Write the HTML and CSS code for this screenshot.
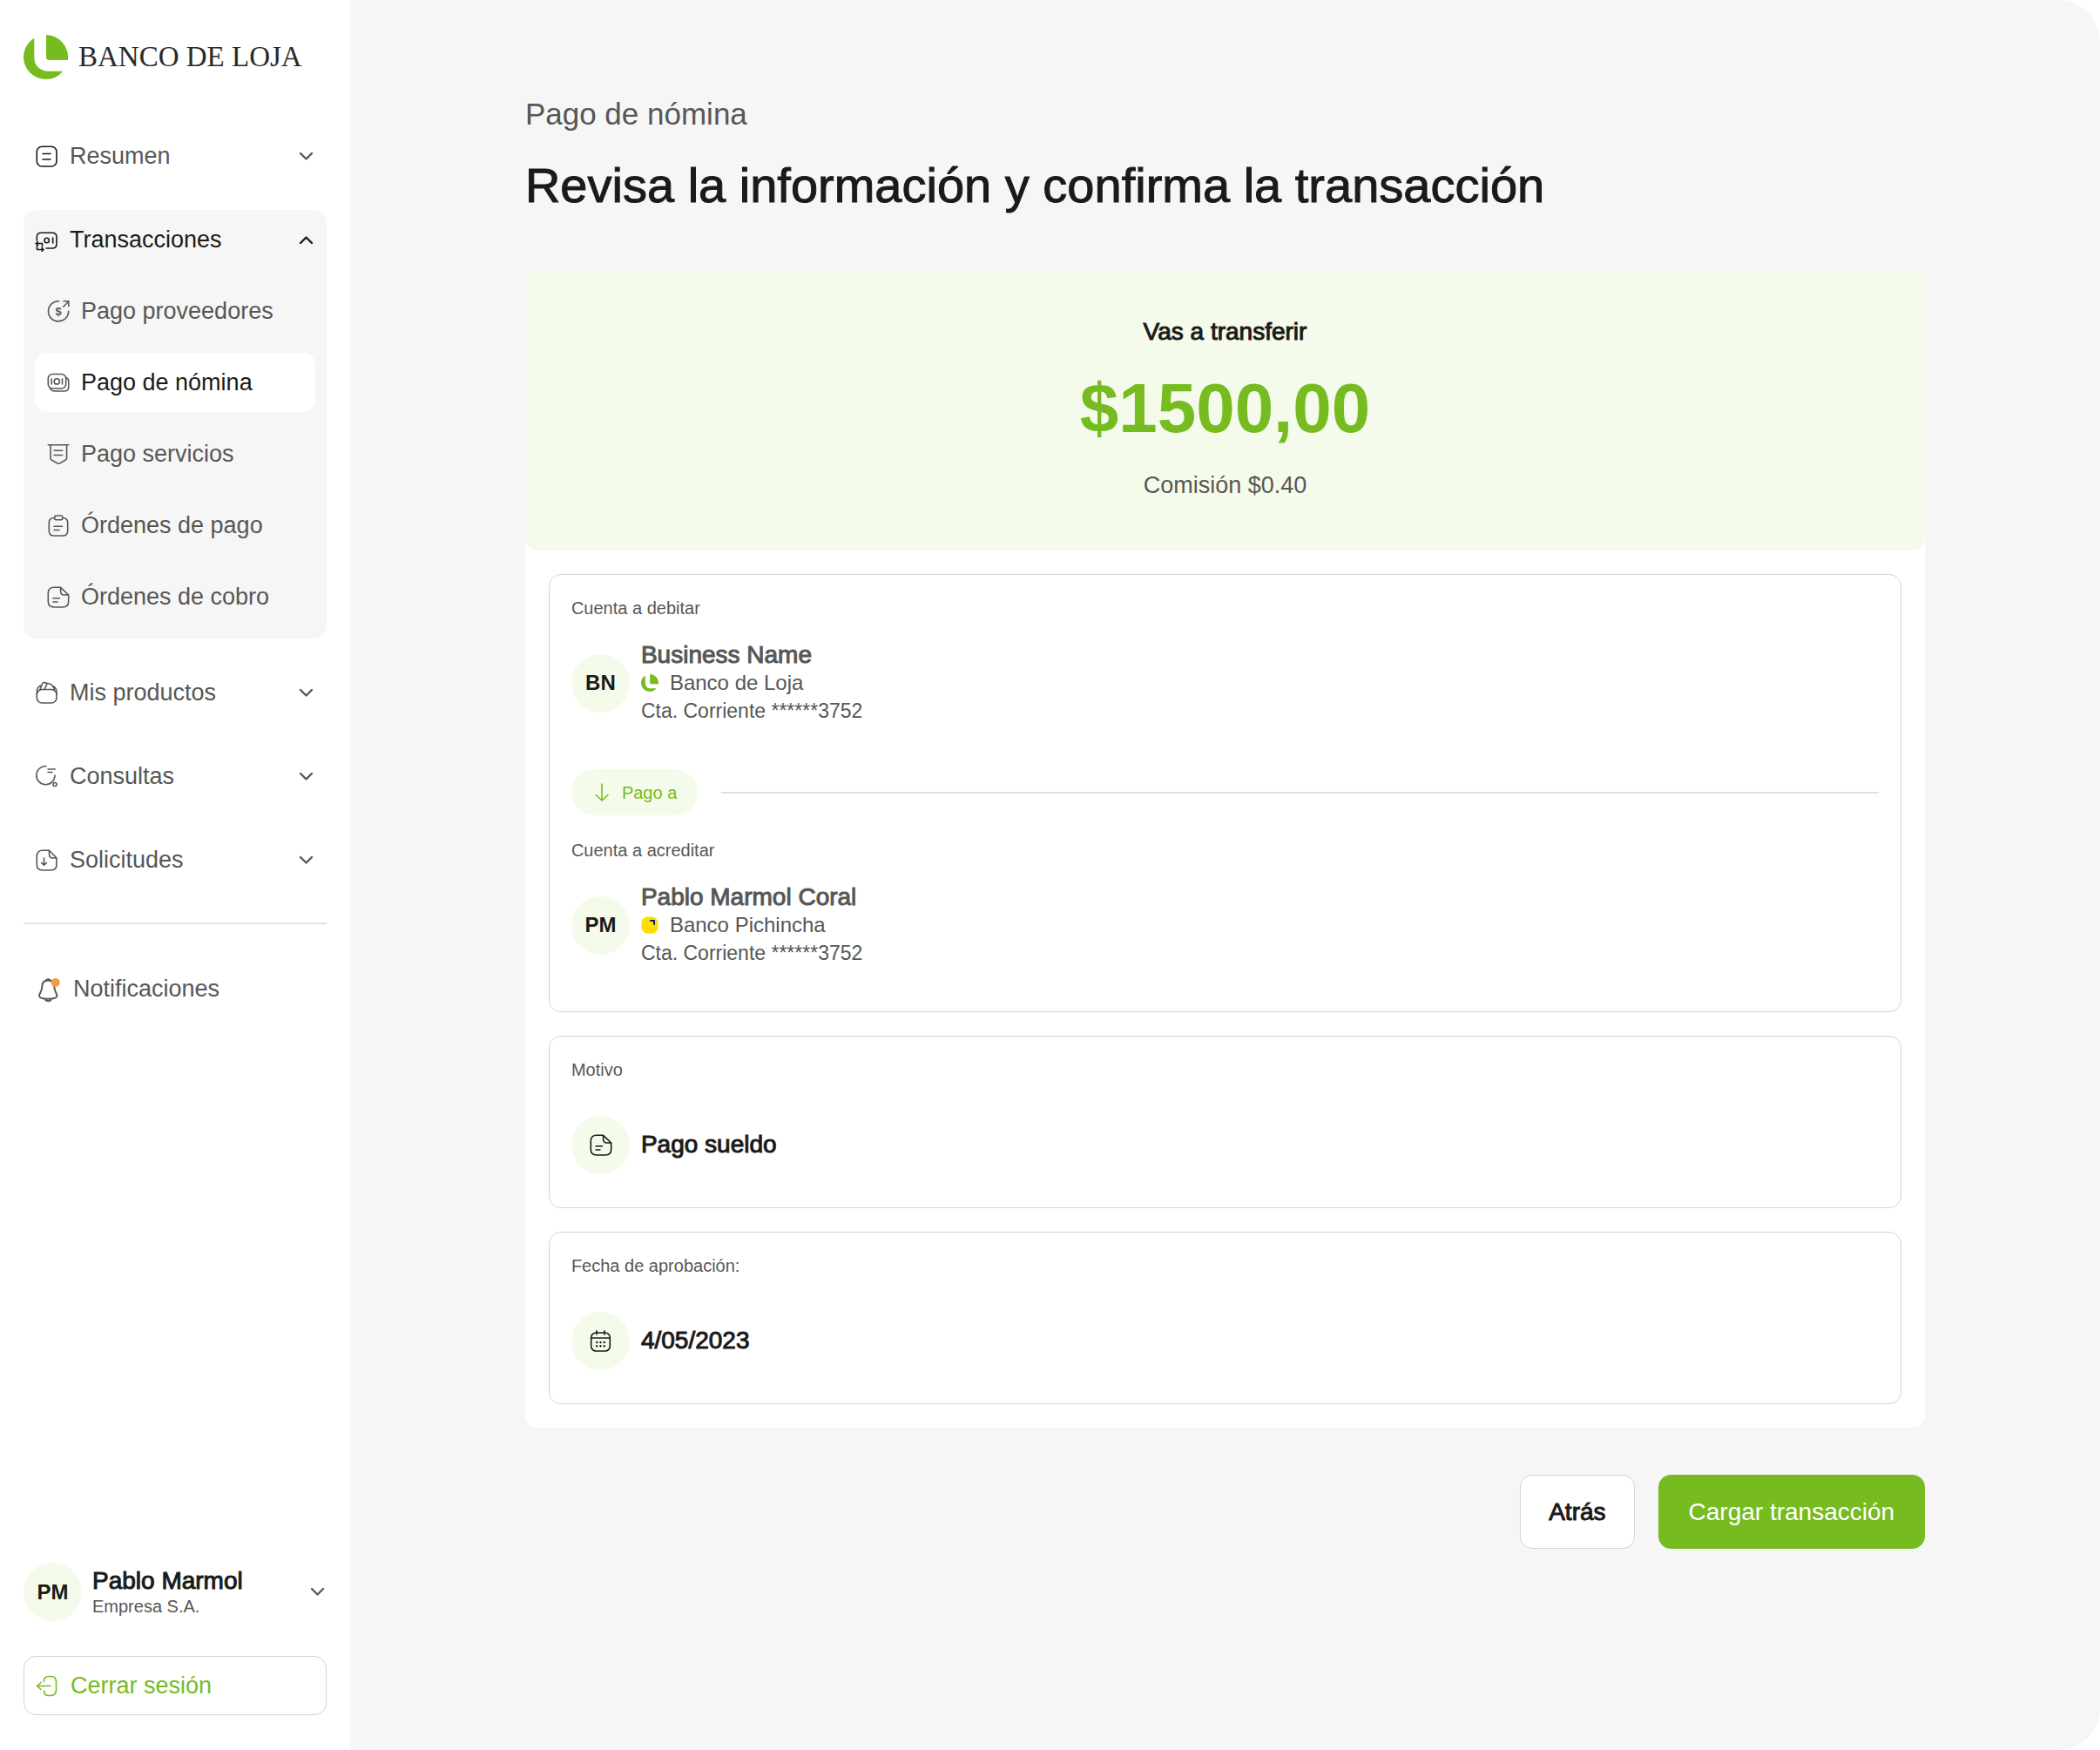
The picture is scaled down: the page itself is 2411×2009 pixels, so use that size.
FILE: index.html
```html
<!DOCTYPE html>
<html lang="es">
	<head>
		<meta charset="utf-8">
		<meta name="viewport" content="width=device-width, initial-scale=1">
		<title>Banco de Loja - Pago de nómina</title>
		<link rel="stylesheet" href="styles.css">
	</head>
	<body>
		<!-- iconos compartidos -->
		<svg class="sprite" aria-hidden="true">
			<symbol id="loja" viewBox="0 0 51 51">
				<path d="M26 0A25.500 25.500 0 0 1 50.800 29H30Q26 29 26 25Z"/>
				<path d="M12.300 3.700A25.500 25.500 0 0 0 25.500 51A25.500 25.500 0 0 0 45.200 41.700H28C19 41.700 12.300 35 12.300 26Z"/>
			</symbol>
			<symbol id="chevron" viewBox="0 0 21 21">
				<path d="M4 7l6.500 6.500L17 7"/>
			</symbol>
			<symbol id="doc" viewBox="0 0 27 27">
				<path d="M16.600 2.300H9Q2.300 2.300 2.300 9v9.300Q2.300 25 9 25h10q6.700 0 6.700-6.700V11zM16.600 2.300v4.400q0 4.300 4.300 4.300h4.800M8 14.700h7.500M8 19h5"/>
			</symbol>
		</svg>
		<div class="app">
			<aside class="sidebar">
				<div class="logo">
					<svg class="logo-mark"><use href="#loja"/></svg>
					<span>BANCO DE LOJA</span>
				</div>
				<nav class="menu">
					<button type="button" class="item">
						<svg class="icon dark" viewBox="0 0 27 27"><rect x="2.300" y="2.300" width="22.700" height="22.700" rx="6"/><path d="M9 10.500h9M9 17h9"/></svg>
						<span>Resumen</span>
						<svg class="chevron"><use href="#chevron"/></svg>
					</button>
					<div class="group">
						<button type="button" class="item open" aria-expanded="true">
							<svg class="icon" viewBox="0 0 27 27"><path d="M2.300 14v-3.700q0-5 5-5h12.700q5 0 5 5V18q0 5-5 5H13"/><circle cx="13.700" cy="14" r="2.700"/><path d="M20.700 11v6M1 17.500h7.500V21M3.500 15.500l-2 2 2 2M2.500 20v4.500H10M8 22.500l2 2-2 2"/></svg>
							<span>Transacciones</span>
							<svg class="chevron up"><use href="#chevron"/></svg>
						</button>
						<a href="#" class="item">
							<svg class="icon" viewBox="0 0 27 27"><path d="M14.500 1.700a11.600 11.600 0 1 0 11.200 11.600M19.700 8.200l6-6M20 1.800h5.800v5.800"/><text class="sign" x="14" y="18" text-anchor="middle">$</text></svg>
							<span>Pago proveedores</span>
						</a>
						<a href="#" class="item active">
							<svg class="icon" viewBox="0 0 27 27"><rect x="2.300" y="3.500" width="20.400" height="16.500" rx="5"/><path d="M23 7.500q2.800 1.500 2.800 4.500v6q0 5-5 5H10q-4 0-5.500-3M6.200 9v6M18.500 9v6"/><circle cx="12.300" cy="11.900" r="3.100"/></svg>
							<span>Pago de nómina</span>
						</a>
						<a href="#" class="item">
							<svg class="icon" viewBox="0 0 27 27"><path d="M2.300 2.700h23.400M5 2.700V18q0 1.500 1.500 2.300l6 3.300q1.700 1 3.400 0l6-3.300q1.700-.8 1.700-2.300V2.700M9 9.200h9.700M9 14.500h9.700"/></svg>
							<span>Pago servicios</span>
						</a>
						<a href="#" class="item">
							<svg class="icon" viewBox="0 0 27 27"><path d="M9.700 4.500H9Q3.300 4.500 3.300 10v9.500Q3.300 25 9 25h10q5.700 0 5.700-5.500V10q0-5.500-5.700-5.500h-.3"/><rect x="9.700" y="2" width="9" height="4.700" rx="1.500"/><path d="M9 14.200h9.500M9 18.500h6"/></svg>
							<span>Órdenes de pago</span>
						</a>
						<a href="#" class="item">
							<svg class="icon"><use href="#doc"/></svg>
							<span>Órdenes de cobro</span>
						</a>
					</div>
					<button type="button" class="item">
						<svg class="icon" viewBox="0 0 27 27"><rect x="2.300" y="9.500" width="22.700" height="15.500" rx="6"/><path d="M2.300 15v-2C2.300 8 4.500 5.500 8 4.500M6 9.500l2.800-7q.6-1.200 2-1L17 3q2 .5 3.500 2.500Q25 7 25 13v2M11 9.500L14 2.800M20.500 5.500L22.500 9.500"/></svg>
						<span>Mis productos</span>
						<svg class="chevron"><use href="#chevron"/></svg>
					</button>
					<button type="button" class="item">
						<svg class="icon" viewBox="0 0 27 27"><path d="M13 1.500A10.600 10.600 0 1 0 23 12M15 5h8.300M15 8.500h5"/><circle cx="23" cy="22.500" r="2"/></svg>
						<span>Consultas</span>
						<svg class="chevron"><use href="#chevron"/></svg>
					</button>
					<button type="button" class="item">
						<svg class="icon" viewBox="0 0 27 27"><path d="M16.500 2.300H9Q2.300 2.300 2.300 9v9.300Q2.300 25 9 25h9.500q6.500 0 6.500-6.700V11zM16.500 2.300v4.400q0 4.300 4.300 4.300H25M10.500 11v8M7.500 16.500l3 2.700 3-2.700"/></svg>
						<span>Solicitudes</span>
						<svg class="chevron"><use href="#chevron"/></svg>
					</button>
					<hr class="line">
					<a href="#" class="item">
						<svg class="icon bell" viewBox="0 0 31 31"><path d="M15.300 5.500C10.500 5.500 8.300 8.500 8.300 12.500C8.300 18.500 5 20.500 5 23C5 25.500 10 26.700 15.300 26.700S25.500 25.500 25.500 23C25.500 20.500 22.300 18.500 22.300 12.500C22.300 8.500 20 5.500 15.300 5.500ZM13 5q2.300-1.300 4.500 0M11.500 27.200q3.800 4 7.600 0"/><circle class="dot" cx="23.700" cy="8" r="5"/></svg>
						<span>Notificaciones</span>
					</a>
				</nav>
				<button type="button" class="user">
					<span class="avatar">PM</span>
					<span class="user-data">
						<span class="name">Pablo Marmol</span>
						<span class="company">Empresa S.A.</span>
					</span>
					<svg class="chevron"><use href="#chevron"/></svg>
				</button>
				<button type="button" class="item logout">
					<svg class="icon" viewBox="0 0 27 27"><path d="M9.500 8.500V8q0-5.500 5.500-5.500h2.500Q23.500 2.500 23.500 9v9q0 6.500-6 6.500H15q-5.500 0-5.500-5.500M17 13.500H1.500M6 9.500l-4.500 4 4.500 4"/></svg>
					<span>Cerrar sesión</span>
				</button>
			</aside>
			<main class="main">
				<div class="content">
					<p class="section">Pago de nómina</p>
					<h1 class="title">Revisa la información y confirma la transacción</h1>
					<div class="summary">
						<div class="total">
							<p class="medium">Vas a transferir</p>
							<p class="amount">$1500,00</p>
							<p>Comisión $0.40</p>
						</div>
						<div class="cards">
							<section class="card">
								<div class="account">
									<h2 class="label">Cuenta a debitar</h2>
									<div class="row">
										<span class="avatar">BN</span>
										<div>
											<p class="name">Business Name</p>
											<p class="bank"><svg class="bank-icon"><use href="#loja"/></svg>Banco de Loja</p>
											<p class="number">Cta. Corriente ******3752</p>
										</div>
									</div>
								</div>
								<div class="direction">
									<span class="pill"><svg class="arrow" viewBox="0 0 22 22"><path d="M11 1v19M4 13.500l7 6.500 7-6.500"/></svg>Pago a</span>
									<hr class="line">
								</div>
								<div class="account">
									<h2 class="label">Cuenta a acreditar</h2>
									<div class="row">
										<span class="avatar">PM</span>
										<div>
											<p class="name">Pablo Marmol Coral</p>
											<p class="bank"><svg class="bank-icon" viewBox="0 0 20 20"><path class="yellow" d="M7 .5h6q2 0 3.300 1.200l2 2Q19.500 5 19.500 7v6q0 2-1.200 3.300l-2 2Q15 19.500 13 19.500H7q-2 0-3.300-1.200l-2-2Q.5 15 .5 13V7q0-2 1.200-3.300l2-2Q5 .5 7 .5z"/><path class="navy" d="M9.500 4h6.500v6.500l-2-1.500V6h-3z"/></svg>Banco Pichincha</p>
											<p class="number">Cta. Corriente ******3752</p>
										</div>
									</div>
								</div>
							</section>
							<section class="card">
								<h2 class="label">Motivo</h2>
								<div class="row">
									<span class="avatar"><svg class="icon"><use href="#doc"/></svg></span>
									<p class="medium">Pago sueldo</p>
								</div>
							</section>
							<section class="card">
								<h2 class="label">Fecha de aprobación:</h2>
								<div class="row">
									<span class="avatar"><svg class="icon" viewBox="0 0 27 27"><rect x="2.700" y="4" width="21.600" height="21" rx="5.500"/><path d="M2.700 10h21.600M9 1.700V6M18 1.700V6"/><path class="dots" d="M9.200 15h.01M13.500 15h.01M17.800 15h.01M9.200 19.300h.01M13.500 19.300h.01M17.800 19.300h.01"/></svg></span>
									<p class="medium">4/05/2023</p>
								</div>
							</section>
						</div>
					</div>
					<div class="actions">
						<button type="button" class="btn">Atrás</button>
						<button type="button" class="btn primary">Cargar transacción</button>
					</div>
				</div>
			</main>
		</div>
	</body>
</html>
```

FILE: styles.css
```css
*{margin:0;padding:0;box-sizing:border-box;}
body{background:#fff;font:27px/36px "Liberation Sans",Arial,sans-serif;color:#575756;}
a{color:inherit;text-decoration:none;}
button{border:0;background:none;font:inherit;color:inherit;text-align:left;cursor:pointer;}
svg{display:block;flex:none;}
.sprite{position:absolute;width:0;height:0;}
.line{border:0;height:2px;background:#dbe4ea;}
.icon{width:27px;height:27px;fill:none;stroke:currentColor;stroke-width:1.6;stroke-linecap:round;stroke-linejoin:round;}
.icon.dark{color:#1a1a1a;}
.chevron{width:21px;height:21px;margin-left:auto;fill:none;stroke:currentColor;stroke-width:2.4;stroke-linecap:round;stroke-linejoin:round;}
.chevron.up{transform:rotate(180deg);}
.avatar{display:flex;align-items:center;justify-content:center;flex:none;width:67px;height:67px;border-radius:50%;background:#f5fbea;color:#1a1a1a;font-size:24px;font-weight:bold;}

.app{display:flex;min-height:100vh;}

/* menu lateral */
.sidebar{display:flex;flex-direction:column;flex:none;width:402px;padding:40px 27px;}
.logo{display:flex;align-items:center;gap:12px;margin-bottom:54px;font:33px/51px "Liberation Serif","Times New Roman",serif;color:#2b2a29;white-space:nowrap;}
.logo-mark{width:51px;height:51px;fill:#76bc21;}
.menu{display:flex;flex-direction:column;gap:28px;}
.item{display:flex;align-items:center;gap:13px;width:100%;height:68px;padding:0 13px;border-radius:14px;}
.item.open{color:#1a1a1a;}
.group{display:flex;flex-direction:column;gap:14px;padding-bottom:14px;border-radius:14px;background:#f6f6f6;}
.group a.item{width:auto;margin:0 13px;}
.item.active{background:#fff;}
.item.active span{color:#1a1a1a;}
.sign{fill:currentColor;stroke:none;font-size:13px;font-weight:bold;}
.menu .line{margin:10px 0 12px;}
.bell{width:31px;height:31px;stroke-width:2;}
.bell .dot{fill:#f39a45;stroke:none;}
.user{display:flex;align-items:center;gap:12px;margin:auto 0 40px;}
.user-data{display:flex;flex-direction:column;}
.user .name{color:#1a1a1a;}
.company{font-size:20px;line-height:26px;}
.logout{border:1px solid #c9d6df;color:#76bc21;}

/* contenido */
.main{flex:1;min-width:0;padding:108px 0;border-radius:0 48px 48px 0;background:#f6f6f6;}
.content{width:80%;margin:0 auto;}
.section{margin-bottom:24px;font-size:35px;line-height:46px;}
.title{margin-bottom:63px;font-size:56px;line-height:70px;font-weight:normal;color:#1a1a1a;-webkit-text-stroke:1px;}
.summary{border-radius:14px;background:#fff;}
.total{display:flex;flex-direction:column;align-items:center;gap:22px;padding:52px 27px 57px;border-radius:14px;background:#f5fbea;}
.amount{font-size:80px;line-height:96px;font-weight:bold;color:#76bc21;}
.cards{display:flex;flex-direction:column;gap:27px;padding:27px;}
.card{padding:24px 25px;border:1px solid #c9d6df;border-radius:14px;}
.label{margin-bottom:24px;font-size:20px;line-height:28px;font-weight:normal;}
.row{display:flex;align-items:center;gap:13px;min-height:96px;}
.account{padding-bottom:27px;}
.medium,.name{font-size:28px;line-height:36px;-webkit-text-stroke:1px;}
.medium{color:#1a1a1a;}
.name{line-height:32px;}
.bank{display:flex;align-items:center;gap:13px;font-size:24px;line-height:32px;}
.bank-icon{width:20px;height:20px;fill:#76bc21;}
.bank-icon .yellow{fill:#ffdd00;}
.bank-icon .navy{fill:#0f265c;}
.number{font-size:23px;line-height:32px;}
.dots{stroke-width:2.4;}
.direction{display:flex;align-items:center;gap:27px;margin:24px 0 26px;}
.direction .line{flex:1;}
.pill{display:flex;align-items:center;gap:12px;height:53px;padding:0 24px;border-radius:27px;background:#f5fbea;color:#76bc21;font-size:20px;}
.arrow{width:22px;height:22px;fill:none;stroke:currentColor;stroke-width:1.6;stroke-linecap:round;stroke-linejoin:round;}
.actions{display:flex;justify-content:flex-end;gap:27px;margin-top:54px;}
.btn{height:85px;padding:0 32px;border:1px solid #c9d6df;border-radius:14px;background:#fff;color:#1a1a1a;font-size:28px;-webkit-text-stroke:1px;}
.btn.primary{padding:0 34px;border-color:#76bc21;background:#76bc21;color:#fff;-webkit-text-stroke:0;}
```
